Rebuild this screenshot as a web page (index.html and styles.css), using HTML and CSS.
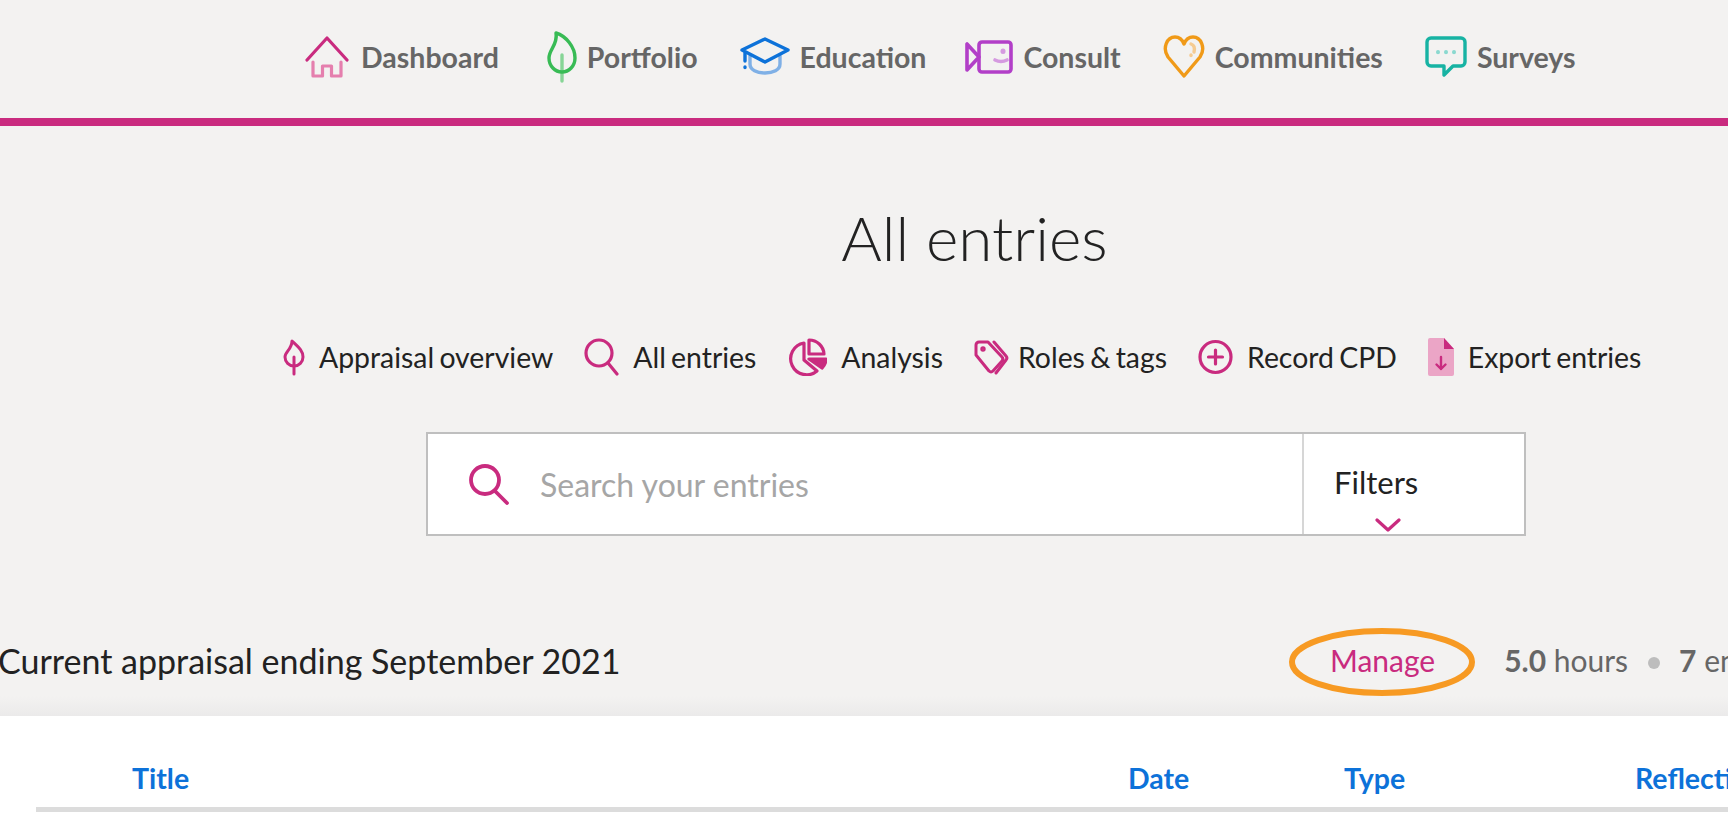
FILE: index.html
```html
<!DOCTYPE html>
<html lang="en">
<head>
<meta charset="utf-8">
<title>All entries</title>
<link rel="stylesheet" href="styles.css">
</head>
<body>
<div class="page">
  <header class="topbar">
    <nav class="mainnav">
      <a class="mainnav__item mainnav__item--home"><svg width="44" height="44" viewBox="0 0 44 44" fill="none" stroke-width="3.2" stroke-linecap="round" stroke-linejoin="round"><path d="M2 25 22 3l20 22" stroke="#c92b7f"/><path d="M8 27v14h9.500V31h9v10H36V27" stroke="#e57fae"/></svg><span>Dashboard</span></a>
      <a class="mainnav__item"><svg width="36" height="52" viewBox="-6 0 36 52" fill="none" stroke-width="3.400" stroke-linecap="round" stroke-linejoin="round"><path d="M15 24v26" stroke="#86d596"/><path d="M9 2c10 3 19 14 19 25 0 8-6 14-13 14S2 35 2 27c0-9 9-13 7-25z" stroke="#38bb55"/></svg><span>Portfolio</span></a>
      <a class="mainnav__item"><svg width="50" height="40" viewBox="0 0 50 40" fill="none" stroke-width="3.400" stroke-linecap="round" stroke-linejoin="round"><path d="M10 19v8c0 6 7 9 15 9s15-3 15-9v-8" stroke="#7fb0e6"/><path d="M2 13 25 2l23 11-23 12z" stroke="#0d72d9"/><path d="M5 16v8M5 30v.5" stroke="#0d72d9"/></svg><span>Education</span></a>
      <a class="mainnav__item mainnav__item--consult"><svg width="48" height="34" viewBox="0 0 48 34" fill="none" stroke-width="3.600" stroke-linecap="round" stroke-linejoin="round"><path d="M14 17 2 4v26z" stroke="#b23fc8"/><rect x="14" y="2" width="32" height="30" rx="3" stroke="#b23fc8"/><path d="M38 11v.5" stroke="#d59ae0" stroke-width="5"/><path d="M30 20c4 2 8 2 12 0" stroke="#d59ae0"/></svg><span>Consult</span></a>
      <a class="mainnav__item"><svg width="42" height="44" viewBox="0 0 42 44" fill="none" stroke-width="3.400" stroke-linecap="round" stroke-linejoin="round"><path d="M21 41 5 22C-1 13 4 2 12 2c4 0 7 2 9 7 2-5 5-7 9-7 8 0 13 11 7 20z" stroke="#f09a18"/><path d="M28 9c3 1 4 4 3 8" stroke="#f5cb91"/><path d="M28 20v.5" stroke="#f5cb91"/></svg><span>Communities</span></a>
      <a class="mainnav__item"><svg width="42" height="42" viewBox="0 0 42 42" fill="none" stroke-width="3.400" stroke-linecap="round" stroke-linejoin="round"><path d="M6 2h30a4 4 0 0 1 4 4v20a4 4 0 0 1-4 4H28l-9 9v-9H6a4 4 0 0 1-4-4V6a4 4 0 0 1 4-4z" stroke="#17b3a3"/><path d="M13 16v.2M21 16v.2M29 16v.2" stroke="#8bd9d0" stroke-width="4"/></svg><span>Surveys</span></a>
    </nav>
  </header>
  <main class="content">
    <h1 class="title">All entries</h1>
    <nav class="subnav">
      <a class="subnav__item"><svg width="24" height="38" viewBox="0 0 24 38" fill="none" stroke="#c92b7f" stroke-width="3" stroke-linecap="round" stroke-linejoin="round"><path d="M11 3c5 5 11 9 11 16 0 5-4 9-9 9s-9-4-9-9c0-5 7-8 7-16z"/><path d="M13 19v17"/></svg><span>Appraisal overview</span></a>
      <a class="subnav__item"><svg width="35" height="38" viewBox="0 0 35 38" fill="none" stroke="#c92b7f" stroke-width="3.200" stroke-linecap="round"><circle cx="15" cy="15" r="13"/><path d="m24 25 9 11"/></svg><span>All entries</span></a>
      <a class="subnav__item"><svg width="40" height="38" viewBox="0 0 40 38" fill="none" stroke="#c92b7f" stroke-width="3.200" stroke-linejoin="round"><path d="M17 5A16 16 0 1 0 30 33L17 22z"/><path d="M22 2a15 15 0 0 1 15 14H22z"/><path d="M22 21h17c0 3-2 7-4 9z" fill="#c92b7f"/></svg><span>Analysis</span></a>
      <a class="subnav__item subnav__item--tag"><svg width="35" height="36" viewBox="0 0 35 36" fill="none" stroke="#c92b7f" stroke-width="3" stroke-linecap="round" stroke-linejoin="round"><path d="M5 3h9l14 15a3 3 0 0 1 0 4L19 32a3 3 0 0 1-4 0L2 16V6a3 3 0 0 1 3-3z"/><path d="M20 3l12 14a3 3 0 0 1 0 4L22 34"/><circle cx="9" cy="10" r="1.200"/></svg><span>Roles &amp; tags</span></a>
      <a class="subnav__item"><svg width="35" height="38" viewBox="0 0 35 38" fill="none" stroke="#c92b7f" stroke-width="3.200" stroke-linecap="round"><circle cx="17.500" cy="19" r="15.500"/><path d="M17.500 12v14M10.500 19h14"/></svg><span>Record CPD</span></a>
      <a class="subnav__item"><svg width="26" height="38" viewBox="0 0 26 38" fill="none"><path d="M2 0h14l10 11v25a2 2 0 0 1-2 2H2a2 2 0 0 1-2-2V2a2 2 0 0 1 2-2z" fill="#eba5c6"/><path d="M16 0l10 11H16z" fill="#c92b7f"/><path d="M13 19v12M8.500 26.500l4.500 4.500 4.500-4.500" stroke="#c92b7f" stroke-width="2.400" stroke-linecap="round" stroke-linejoin="round"/></svg><span>Export entries</span></a>
    </nav>
    <div class="search">
      <div class="search__field">
        <svg width="42" height="42" viewBox="0 0 42 42" fill="none" stroke="#c92b7f" stroke-width="3.800" stroke-linecap="round"><circle cx="17" cy="17" r="14"/><path d="m27 28 12 12"/></svg>
        <span class="search__placeholder">Search your entries</span>
      </div>
      <div class="search__filters">
        <span>Filters</span>
        <svg class="search__chev" width="26" height="14" viewBox="0 0 26 14" fill="none" stroke="#c92b7f" stroke-width="3.200" stroke-linecap="round" stroke-linejoin="round"><path d="m2 2 11 10L24 2"/></svg>
      </div>
    </div>
    <div class="period">
      <div class="period__title">Current appraisal ending September 2021</div>
      <div class="period__right">
        <a class="period__manage">Manage<svg class="ring" width="188" height="72" viewBox="0 0 188 72" fill="none"><ellipse cx="94" cy="36" rx="90" ry="31" stroke="#f79a23" stroke-width="6"/></svg></a>
        <div class="period__stats"><b>5.0</b> hours<i class="dot"></i><b>7</b> entries</div>
      </div>
    </div>
  </main>
  <section class="tablecard">
    <div class="tablehead">
      <span class="th th--title">Title</span>
      <span class="th th--date">Date</span>
      <span class="th th--type">Type</span>
      <span class="th th--refl">Reflections</span>
    </div>
  </section>
</div>
</body>
</html>
```
FILE: styles.css
```css
* { box-sizing: border-box; }
html, body { margin: 0; height: 100%; overflow: hidden; }
body { font-family: Lato, "Liberation Sans", sans-serif; background: #f3f2f1; color: #222; }
.page { width: 1728px; height: 824px; overflow: hidden; display: flex; flex-direction: column; }
.topbar { height: 126px; flex: none; border-bottom: 8px solid #c92b7f; padding-left: 305px; padding-top: 29px; }
.mainnav { display: flex; align-items: center; height: 56px; gap: 42px; }
.mainnav__item { display: flex; align-items: center; gap: 10px; font-size: 28.500px; font-weight: 700; color: #666; white-space: nowrap; }
.mainnav__item svg { flex: none; }
.mainnav__item--home { gap: 12px; }
.mainnav__item--consult { margin-left: -3px; }
.content { flex: none; height: 590px; display: flex; flex-direction: column; background: linear-gradient(#f3f2f1 570px, #ebeaea 590px); }
.title { margin: 75px 0 0; font-size: 62px; font-weight: 300; line-height: 72px; text-align: center; color: #222; padding-left: 221px; white-space: nowrap; }
.subnav { display: flex; align-items: center; gap: 31px; height: 40px; margin: 64px 0 0 281px; }
.subnav__item { display: flex; align-items: center; gap: 14px; font-size: 28.400px; word-spacing: -2px; color: #222; white-space: nowrap; }
.subnav__item svg { flex: none; }
.subnav__item--tag { gap: 9px; }
.search { display: flex; width: 1100px; height: 104px; margin: 55px 0 0 426px; background: #fff; border: 2px solid #bfbfbf; }
.search__field { flex: 1; display: flex; align-items: center; gap: 30px; padding-left: 40px; border-right: 2px solid #d6d6d6; }
.search__placeholder { font-size: 32px; color: #a6a6a6; }
.search__filters { width: 220px; flex: none; position: relative; padding: 30px 0 0 30px; font-size: 31px; line-height: 36px; color: #222; }
.search__chev { position: absolute; left: 71px; bottom: 2px; }
.period { display: flex; justify-content: space-between; align-items: center; height: 72px; margin-top: 88px; }
.period__title { font-size: 34px; margin-left: -2px; white-space: nowrap; color: #222; }
.period__right { display: flex; align-items: center; width: 440px; flex: none; white-space: nowrap; }
.period__manage { position: relative; font-size: 30px; color: #c92b7f; margin-left: 42px; }
.ring { position: absolute; left: -42px; top: -16px; }
.period__stats { font-size: 30px; color: #666; margin-left: 69px; }
.period__stats b { font-weight: 700; }
.dot { display: inline-block; width: 12px; height: 12px; border-radius: 50%; background: #bdbdbd; margin: 0 19px 3px 20px; }
.tablecard { flex: 1; background: #fff; }
.tablehead { height: 96px; margin-left: 36px; padding-bottom: 12px; border-bottom: 5px solid #dcdcdc; display: flex; align-items: flex-end; font-size: 28.500px; font-weight: 700; color: #0d72d9; }
.th { white-space: nowrap; flex: none; }
.th--title { margin-left: 96px; width: 996px; }
.th--date { width: 216px; }
.th--type { width: 291px; }
```
